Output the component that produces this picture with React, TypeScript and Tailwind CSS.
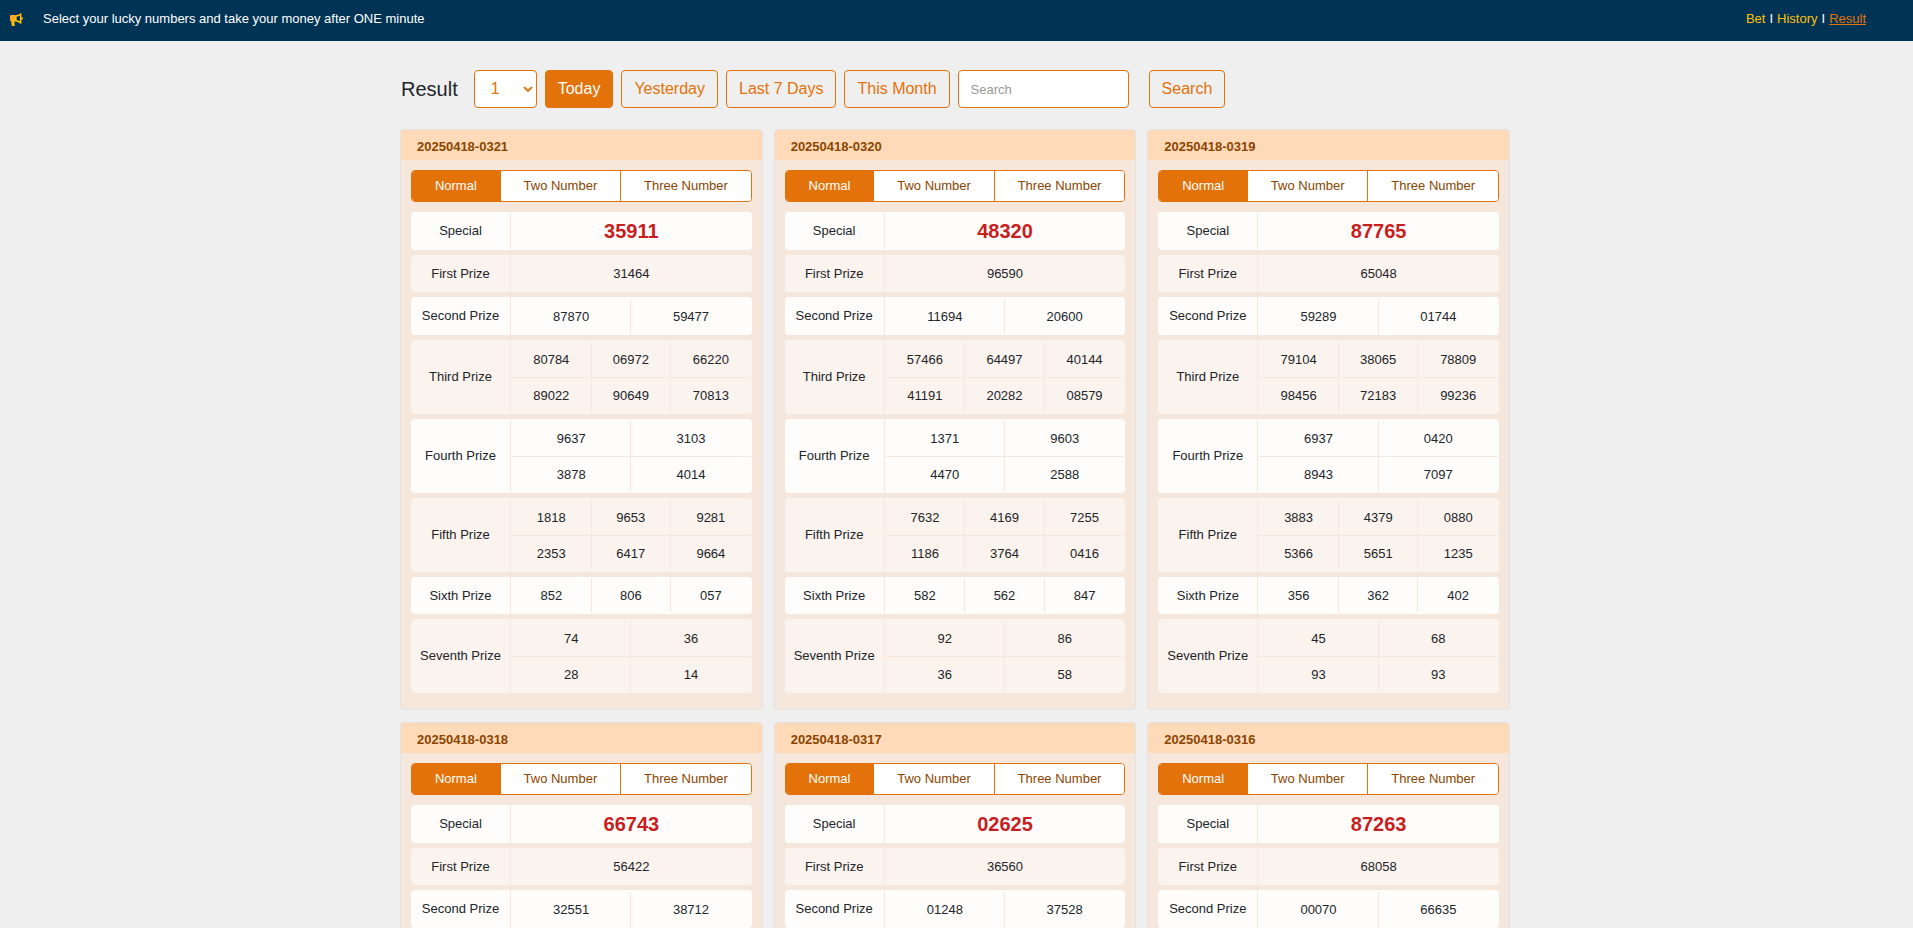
import { useState } from 'react'

const tabs = ['Normal', 'Two Number', 'Three Number']

const ranges = ['Today', 'Yesterday', 'Last 7 Days', 'This Month']

const prizes = [
  { label: 'Special', cols: 1, height: 'h-[38px]' },
  { label: 'First Prize', cols: 1, height: 'h-[37px]' },
  { label: 'Second Prize', cols: 2, height: 'h-[38px]' },
  { label: 'Third Prize', cols: 3, height: 'h-[74px]' },
  { label: 'Fourth Prize', cols: 2, height: 'h-[74px]' },
  { label: 'Fifth Prize', cols: 3, height: 'h-[74px]' },
  { label: 'Sixth Prize', cols: 3, height: 'h-[37px]' },
  { label: 'Seventh Prize', cols: 2, height: 'h-[74px]' },
]

const gridCols: Record<number, string> = {
  1: 'grid-cols-1',
  2: 'grid-cols-2',
  3: 'grid-cols-3',
}

// one string per prize, in the order of the prizes list
const draws = [
  {
    id: '20250418-0321',
    results: ['35911', '31464', '87870 59477', '80784 06972 66220 89022 90649 70813', '9637 3103 3878 4014', '1818 9653 9281 2353 6417 9664', '852 806 057', '74 36 28 14'],
  },
  {
    id: '20250418-0320',
    results: ['48320', '96590', '11694 20600', '57466 64497 40144 41191 20282 08579', '1371 9603 4470 2588', '7632 4169 7255 1186 3764 0416', '582 562 847', '92 86 36 58'],
  },
  {
    id: '20250418-0319',
    results: ['87765', '65048', '59289 01744', '79104 38065 78809 98456 72183 99236', '6937 0420 8943 7097', '3883 4379 0880 5366 5651 1235', '356 362 402', '45 68 93 93'],
  },
  {
    id: '20250418-0318',
    results: ['66743', '56422', '32551 38712'],
  },
  {
    id: '20250418-0317',
    results: ['02625', '36560', '01248 37528'],
  },
  {
    id: '20250418-0316',
    results: ['87263', '68058', '00070 66635'],
  },
]

const Megaphone = () => (
  <svg viewBox="0 0 14 14" className="h-3.5 w-3.5" aria-hidden="true">
    <path d="M1 4a1 1 0 0 1 1-1h4v6H2a1 1 0 0 1-1-1z" fill="#ffa726" />
    <path d="M2 8.5h4l-.6 2 .4 3.5H2.8z" fill="#ffc107" />
    <path d="M6 3.2c2.6-.2 4.600-1 6.400-2.400v11.400c-1.800-1.500-3.800-2.400-6.400-2.700zM7.600 4.700v3.400c1.300.2 2.300.600 3.300 1.100V3.600c-1 .5-2 .900-3.300 1.100z" fill="#ffc107" fillRule="evenodd" />
    <path d="M12.200 4.700a1.700 1.700 0 0 1 0 3.400z" fill="#ffa726" />
  </svg>
)

const TopBar = () => (
  <header className="flex h-[41px] items-center bg-[#003354] pr-[47px] pb-1 pl-[9px] text-[13px] font-medium text-white">
    <Megaphone />
    <p className="ml-5">Select your lucky numbers and take your money after ONE minute</p>
    <nav className="ml-auto flex gap-1">
      <a href="#bet" className="text-[#ffc107]">Bet</a>
      <span>I</span>
      <a href="#history" className="text-[#ffc107]">History</a>
      <span>I</span>
      <a href="#result" className="text-[#e4720a] underline">Result</a>
    </nav>
  </header>
)

const Toolbar = () => {
  const [range, setRange] = useState('Today')

  return (
    <form className="flex flex-wrap items-center gap-2 pl-px text-base" onSubmit={(e) => e.preventDefault()}>
      <h1 className="mr-2 text-xl text-[#212529]">Result</h1>
      <div className="relative">
        <select
          aria-label="Game"
          className="h-[38px] w-[63px] appearance-none rounded border border-[#e4720a] bg-white pl-4 text-[#e4720a]"
        >
          <option>1</option>
          <option>2</option>
          <option>3</option>
        </select>
        <svg viewBox="0 0 10 6" className="pointer-events-none absolute top-4 right-1 h-1.5 w-2.5" fill="none">
          <path d="M1 1l4 4 4-4" stroke="#e4720a" strokeWidth="1.8" />
        </svg>
      </div>
      {ranges.map((name) => (
        <button
          key={name}
          type="button"
          onClick={() => setRange(name)}
          className={`h-[38px] rounded border border-[#e4720a] px-3 ${
            range === name ? 'bg-[#e4720a] font-medium text-white' : 'text-[#e4720a]'
          }`}
        >
          {name}
        </button>
      ))}
      <input
        type="text"
        aria-label="Search"
        placeholder="Search"
        className="h-[38px] w-[171px] rounded border border-[#e4720a] bg-white px-3 text-[13px] placeholder:text-[#999]"
      />
      <button type="submit" className="ml-3 h-[38px] rounded border border-[#e4720a] px-3 text-[#e4720a]">
        Search
      </button>
    </form>
  )
}

const ResultTable = ({ results }: { results: string[] }) => (
  <table className="-mb-[5px] w-full table-fixed border-separate border-spacing-x-0 border-spacing-y-[5px]">
    <tbody>
      {results.map((result, i) => {
        const prize = prizes[i]
        const numbers = result.split(' ')
        const bg = i % 2 === 0 ? 'bg-[#fefdfc]' : 'bg-[#fbf3ee]'

        return (
          <tr key={prize.label} className={prize.height}>
            <th scope="row" className={`w-[100px] rounded-l border-r border-[#f6e7dc] p-0 font-normal ${bg}`}>
              {prize.label}
            </th>
            <td className={`rounded-r p-px ${bg}`}>
              <div className={`grid text-center ${gridCols[prize.cols]}`}>
                {numbers.map((number, n) => (
                  <span
                    key={n}
                    className={`border-[#f6e7dc] ${i === 0 ? 'text-xl leading-[35px] font-bold text-[#c81e1e]' : 'leading-[35px]'} ${
                      (n + 1) % prize.cols ? 'border-r' : ''
                    } ${n + prize.cols < numbers.length ? 'border-b' : ''}`}
                  >
                    {number}
                  </span>
                ))}
              </div>
            </td>
          </tr>
        )
      })}
    </tbody>
  </table>
)

const DrawCard = ({ id, results }: { id: string; results: string[] }) => {
  const [tab, setTab] = useState('Normal')

  return (
    <article className="overflow-hidden rounded border border-[#e2e2e2] bg-[#f6e7dc] text-[13px] text-[#212529]">
      <h2 className="bg-[#ffdab9] px-4 pt-1 text-[13px] leading-[26px] font-bold text-[#8b4500]">{id}</h2>
      <div className="px-2.5 pt-2.5 pb-4">
        <div className="mb-[5px] flex h-8 divide-x divide-[#e4720a] overflow-hidden rounded border border-[#e4720a]">
          {tabs.map((name) => (
            <button
              key={name}
              type="button"
              onClick={() => setTab(name)}
              className={`grow ${tab === name ? 'bg-[#e4720a] font-medium text-white' : 'bg-white text-[#8b4500]'}`}
            >
              {name}
            </button>
          ))}
        </div>
        <ResultTable results={results} />
      </div>
    </article>
  )
}

const App = () => {
  return (
    <div className="min-h-screen bg-[#efefef] font-['Liberation_Sans',Arial,sans-serif]">
      <TopBar />
      <main className="mx-auto max-w-[1113px] pt-[29px] pr-[3px]">
        <Toolbar />
        <div className="mt-[21px] grid grid-cols-1 gap-x-[11px] gap-y-3 md:grid-cols-3">
          {draws.map((draw) => (
            <DrawCard key={draw.id} id={draw.id} results={draw.results} />
          ))}
        </div>
      </main>
    </div>
  )
}

export default App
